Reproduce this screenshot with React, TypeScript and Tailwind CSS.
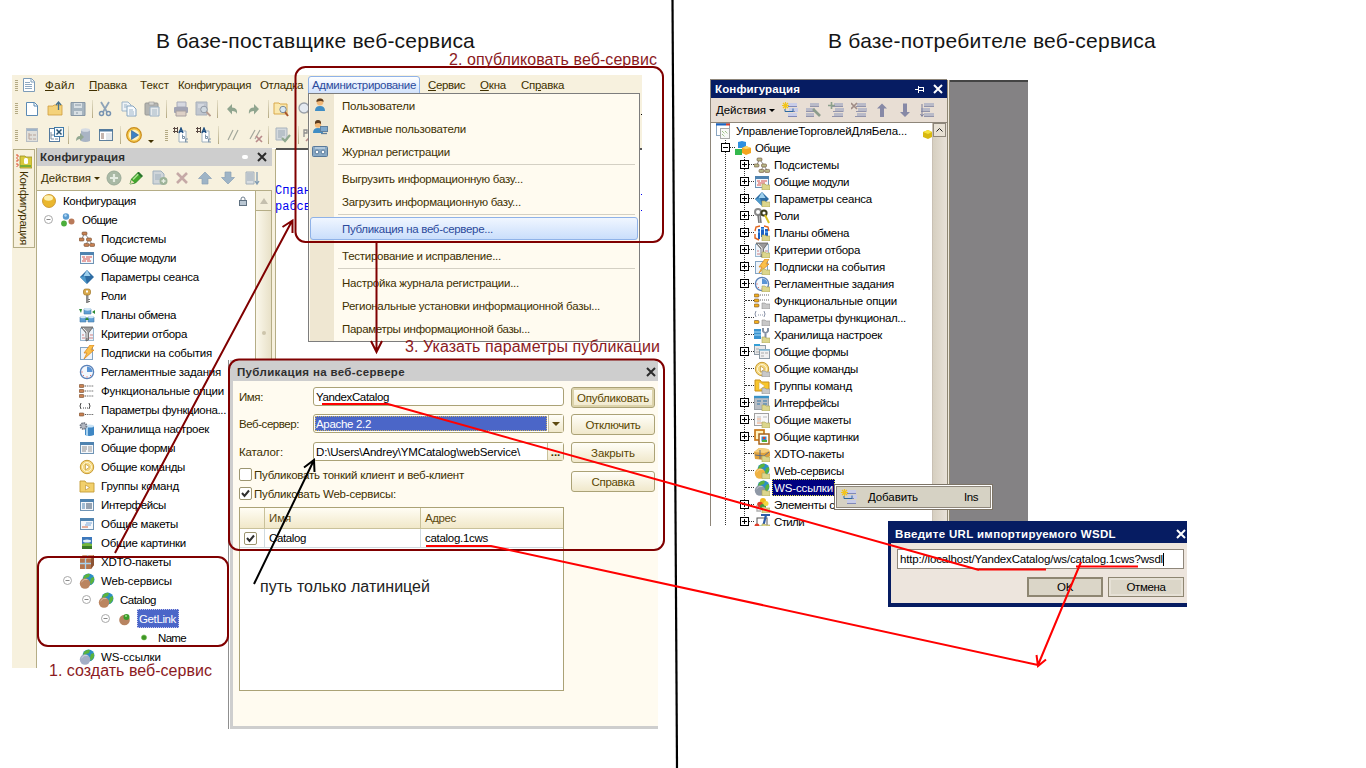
import React, { useLayoutEffect, useRef } from "react";

type TextProps = { w: number; className?: string; vertical?: boolean; children: React.ReactNode };

/* One-line label whose tracking is adjusted so that it takes up exactly w pixels. */
function T({ w, className = "", vertical = false, children }: TextProps) {
  const ref = useRef<HTMLSpanElement>(null);
  useLayoutEffect(() => {
    const el = ref.current;
    if (!el) return;
    el.style.letterSpacing = "0px";
    const box = el.getBoundingClientRect();
    const n = (el.textContent || "").length;
    el.style.letterSpacing = `${(w - (vertical ? box.height : box.width)) / n}px`;
  }, [w, vertical]);
  return (
    <span ref={ref} className={`inline-block shrink-0 whitespace-pre ${className}`}>
      {children}
    </span>
  );
}

function Svg({ children, className = "", s = 16 }: { children: React.ReactNode; className?: string; s?: number }) {
  return (
    <svg width={s} height={s} viewBox="0 0 16 16" fill="none" className={`shrink-0 ${className}`}>
      {children}
    </svg>
  );
}

const node = (x: number, y: number, f: string) => <rect x={x} y={y} width="5" height="3" rx="1" fill={f} stroke="#6b4a30" strokeWidth=".6" />;
const frame = (
  <>
    <rect x="1.5" y="2.5" width="13" height="11" fill="#f4f7fb" stroke="#6f94b5" />
    <rect x="1" y="2" width="14" height="3" fill="#4f83b0" />
  </>
);
const globe = (ball: string) => (
  <>
    <circle cx="9.5" cy="6.5" r="6" fill="#2c8fc4" />
    <path d="M5 3q3-3 6-2l-1 3-3 1-1 3-2-2zM12 5l3-1v4l-3 4-1-3z" fill="#5bb33c" />
    <circle cx="6" cy="10.5" r="5.2" fill={ball} />
    <path d="M2.5 9q2-3.500 6-2.500" stroke="#fff" strokeOpacity=".45" />
  </>
);

const G: Record<string, React.ReactNode> = {
  ball: (
    <>
      <circle cx="8" cy="8" r="6.500" fill="#eab72e" stroke="#c58d22" strokeWidth=".8" />
      <ellipse cx="7.500" cy="5" rx="4.500" ry="2.800" fill="#fdf0b0" />
    </>
  ),
  common: (
    <>
      <circle cx="6" cy="4.500" r="3.200" fill="#5a9bd0" />
      <circle cx="4" cy="11.500" r="2.900" fill="#4cae3c" />
      <circle cx="11.500" cy="9.500" r="3" fill="#b97a5a" />
      <circle cx="5.500" cy="3.500" r="1.200" fill="#b5d8f4" />
    </>
  ),
  commonR: (
    <>
      <path d="M3 2l4-1 4 1v6H3z" fill="#2f8fe0" />
      <path d="M0 9h7v6H0z" fill="#33b84c" />
      <path d="M7 8l4-2 5 2v5l-5 2-4-2z" fill="#f5a51d" />
      <path d="M7 8l4-2 5 2-5 1z" fill="#ffd766" />
    </>
  ),
  subs: (
    <>
      <path d="M5 3L3 8M6 3l4 5M10 9l3 4M10 9l-3 4" stroke="#8d8d8d" />
      {node(3, 1, "#c98253")}
      {node(0, 7, "#c98253")}
      {node(7.500, 7, "#c98253")}
      {node(5, 12.400, "#c98253")}
      {node(10.700, 12.400, "#c98253")}
    </>
  ),
  subsR: (
    <>
      <path d="M5 3L3 8M6 3l4 5M10 9l3 4M10 9l-3 4" stroke="#8d8d8d" />
      {node(3, 1, "#b9b98a")}
      {node(0, 7, "#b9b98a")}
      {node(7.500, 7, "#b9b98a")}
      {node(5, 12.400, "#b9b98a")}
      {node(10.700, 12.400, "#b9b98a")}
    </>
  ),
  modules: (
    <>
      {frame}
      <path d="M3 7h3M7 7h6M4 9h7M3 11h4M8 11h4" stroke="#d8534a" />
    </>
  ),
  diamond: (
    <>
      <path d="M8 1l7 7-7 7-7-7z" fill="#2d6ca3" />
      <path d="M8 1l3.500 6H4.500z" fill="#9ed0ee" />
      <path d="M1 8l5-1 2 8z" fill="#4f9acb" />
    </>
  ),
  key: (
    <>
      <path d="M7 7h2.500v8H7z" fill="#8c8c8c" />
      <path d="M9 11h2v1H9zM9 13h2v1H9z" fill="#777" />
      <rect x="4.500" y="1" width="7" height="6" rx="2" fill="#d9a94c" stroke="#a17728" strokeWidth=".7" />
      <rect x="7" y="2.500" width="2" height="2" fill="#fff" />
    </>
  ),
  keyR: (
    <>
      <circle cx="4" cy="4" r="3" stroke="#8a8a8a" strokeWidth="2" />
      <path d="M4 7l1 8M6 6l1 9" stroke="#777" strokeWidth="1.600" />
      <circle cx="10" cy="5" r="2.600" stroke="#3c3c1c" strokeWidth="2" />
      <path d="M11 7l4 8" stroke="#d8c020" strokeWidth="2" />
    </>
  ),
  plans: (
    <>
      <path d="M5 2h7v5H5zM1 10h6v5H1zM9 10h6v5H9z" fill="#5f9fd4" stroke="#4479a8" strokeWidth=".6" />
      <ellipse cx="8.500" cy="2.300" rx="3.500" ry="1.400" fill="#cfe6f7" />
      <ellipse cx="4" cy="10" rx="3" ry="1.300" fill="#cfe6f7" />
      <ellipse cx="12" cy="10" rx="3" ry="1.300" fill="#cfe6f7" />
      <path d="M0 2h3l-1 4zM16 3v4l-3-2zM6 13h4l-2-3z" fill="#2a8a34" />
    </>
  ),
  plansR: (
    <>
      <path d="M4 4h2v10H4zM7 2h3v10H7zM11 4h3v9h-3z" fill="#1c62c4" />
      <path d="M7 4h3M4 7h2M11 7h3" stroke="#7ccaff" />
      <path d="M1 6l1-4 4-1M15 6l-1-4-4-1M1 9v4l4 2" stroke="#e2641c" strokeWidth="1.400" />
    </>
  ),
  filter: (
    <>
      <rect x="1.500" y="2.500" width="13" height="12" fill="#eef4fa" stroke="#9bb8d0" />
      <path d="M3 12h3M3 9h2M11 9h3M10 12h4" stroke="#d08080" />
      <path d="M2 1h12L9.500 7v7L7 15V7z" fill="#9a9a9a" stroke="#5e5e5e" strokeWidth=".8" />
      <path d="M4 2l4 4v6" stroke="#e8e8e8" />
    </>
  ),
  bolt: (
    <>
      <rect x="1.500" y="2.500" width="12" height="12" fill="#eef4fa" stroke="#84a5c4" />
      <path d="M11 0h4l-3 5h3L5 14l3-6H5z" fill="#fbc04a" stroke="#d98822" strokeWidth=".8" />
    </>
  ),
  clock: (
    <>
      <circle cx="8" cy="8" r="6.600" fill="#f3f7fc" stroke="#5b82b8" strokeWidth="1.300" />
      <path d="M8 8V2.500A5.500 5.500 0 0 1 13.500 8z" fill="#5a95d6" />
      <path d="M2.500 8h1M8 13.500v-1M4 12l.7-.7M12 12l-.7-.7" stroke="#d23c3c" />
    </>
  ),
  opts: (
    <>
      {node(0, 1.500, "#c98253")}
      {node(0, 6.500, "#c98253")}
      {node(0, 11.500, "#c98253")}
      <path d="M6 3h9M6 8h9M6 13h9" stroke="#555" strokeDasharray="1.200 1" />
    </>
  ),
  optsR: (
    <>
      {node(0, 1, "#f2b01e")}
      {node(0, 6, "#f2b01e")}
      {node(0, 11, "#f2b01e")}
      <path d="M6 2h9M6 7h9" stroke="#666" strokeDasharray="1 1" />
    </>
  ),
  params: (
    <>
      <path d="M2 1Q0 4 2 7M10 1q2 3 0 6" stroke="#444" />
      <path d="M4 6h5" stroke="#444" strokeDasharray="1 1" />
      {node(0, 11, "#c98253")}
      <path d="M6 12.500h9" stroke="#555" strokeDasharray="1.200 1" />
    </>
  ),
  paramsR: (
    <>
      <path d="M2 1Q0 4 2 7M10 1q2 3 0 6" stroke="#8a93a8" />
      <path d="M4 5h5" stroke="#8a93a8" strokeDasharray="1 1" />
      {node(0, 10.500, "#f2b01e")}
    </>
  ),
  store: (
    <>
      <path d="M6 5h9v9q-4.500 2-9 0z" fill="#3f87c4" />
      <path d="M7 6h2v9H7z" fill="#a8d2f0" />
      <ellipse cx="10.500" cy="5" rx="4.500" ry="1.600" fill="#cbe4f6" />
      <circle cx="4.500" cy="5" r="3" fill="#b4b9c2" stroke="#747b88" strokeWidth="1.800" strokeDasharray="1.500 .8" />
    </>
  ),
  storeR: (
    <>
      <path d="M0 2h7v10H0z" fill="#3b93cf" />
      <path d="M0 5h7M0 8h7" stroke="#a9dbf7" />
      <path d="M9 1v3q2.500 4 5 0V1M11.500 6v6" stroke="#8390a3" strokeWidth="2" />
    </>
  ),
  form: (
    <>
      {frame}
      <path d="M3 7h5M3 9h5M3 11h4" stroke="#8b8b8b" />
      <path d="M9 7h4M9 9h4M9 11h4" stroke="#b9b9b9" strokeWidth="1.400" />
    </>
  ),
  formR: (
    <>
      <rect x=".5" y="1.500" width="11" height="9" fill="#e8e8e8" stroke="#8e9aa5" />
      <path d="M0 1h6" stroke="#35a0d8" strokeWidth="2" />
      <path d="M2 5h3M2 8h3" stroke="#aaa" />
      <rect x="5.500" y="5.500" width="10" height="9" fill="#f0f0f0" stroke="#8e9aa5" />
      <path d="M5 6h11" stroke="#7fb8d6" strokeWidth="1.500" />
      <path d="M7 9h3M11 9h3M7 12h3" stroke="#aaa" />
    </>
  ),
  command: (
    <>
      <circle cx="8" cy="8" r="6.700" fill="#f4d67c" stroke="#c79b35" />
      <circle cx="8" cy="8" r="4.500" stroke="#fff7d8" />
      <path d="M6.500 5l4 3-4 3z" fill="#fff" stroke="#b58a2c" strokeWidth=".6" />
    </>
  ),
  group: (
    <>
      <path d="M1 3h5l1.500 2H15v9H1z" fill="#f2d06c" stroke="#c49c35" strokeWidth=".9" />
      <path d="M6.500 7l4 2.500-4 2.500z" fill="#fff" stroke="#b58a2c" strokeWidth=".6" />
    </>
  ),
  groupR: (
    <>
      <path d="M1 2h5l1.500 2H15v9H1z" fill="#f8c62c" stroke="#c8901c" />
      <path d="M5 4l6 4-6 4z" fill="#fff" stroke="#d8a83c" strokeWidth=".6" />
    </>
  ),
  iface: (
    <>
      {frame}
      <path d="M3 7h3M3 9h3M3 11h3" stroke="#4f83b0" />
      <path d="M7 7h6M7 9h6M7 11h6" stroke="#77889a" strokeWidth="1.300" />
    </>
  ),
  ifaceR: (
    <>
      <rect x=".5" y="1.500" width="14" height="13" fill="#b9bec4" stroke="#98a0a8" />
      <path d="M0 2h15" stroke="#3a93c8" strokeWidth="2.400" />
      <path d="M3 6h4M9 6h4M3 9h3M9 9h4" stroke="#5d8fb4" strokeWidth="1.300" />
    </>
  ),
  layout: (
    <>
      {frame}
      <path d="M7 7h6M6 9h6" stroke="#7aa6d6" />
      <path d="M3 11h6" stroke="#e08a6a" strokeWidth="1.300" />
    </>
  ),
  layoutR: (
    <>
      <rect x=".5" y="1.500" width="14" height="12" fill="#f8f8f8" stroke="#a0a0a0" />
      <path d="M3 5h4M3 9h4M9 5h4" stroke="#bbb" />
      <path d="M3 7h4M3 11h7" stroke="#eaa07a" />
    </>
  ),
  picture: (
    <>
      <rect x="3" y="2" width="10" height="12" fill="#3c78bc" />
      <ellipse cx="8" cy="6" rx="4" ry="1.500" fill="#e3f0fa" />
      <path d="M3 9q5-2 10 0v2H3z" fill="#74b83c" />
      <path d="M3 11h10v3H3z" fill="#3a7a28" />
    </>
  ),
  pictureR: (
    <>
      <rect x="1" y="1" width="9" height="10" fill="#fff2c0" stroke="#c87818" strokeWidth="1.700" />
      <rect x="5" y="5" width="10" height="10" fill="#fff" stroke="#a8641c" strokeWidth="1.500" />
      <rect x="7.500" y="7.500" width="5" height="5" fill="#3a84c4" />
      <path d="M8 11h5v2H8z" fill="#4cae3c" />
      <path d="M9 8h2v2H9z" fill="#e03c28" />
    </>
  ),
  xdto: (
    <>
      <path d="M4 1h11v10l-3 4H1V5z" fill="#b5764e" />
      <path d="M4 1h11l-3 4H1z" fill="#d6a27e" />
      <path d="M12 5l3-4v10l-3 4z" fill="#8c5434" />
      <path d="M6.500 5v10M1 9.500h11M6.500 5L9 1" stroke="#a9d2ee" strokeWidth="1.300" />
    </>
  ),
  xdtoR: (
    <>
      <path d="M0 6l5-4 9 1 2 3v4l-5 4-10-1z" fill="#e0a23c" />
      <path d="M0 6l5-4 9 1 2 2-6 2z" fill="#f6cf7c" />
      <path d="M6 4v9M1 9l9 1 5-4" stroke="#5b6b88" />
    </>
  ),
  web: globe("#bb8560"),
  webR: globe("#efb243"),
  ws: globe("#a3aec6"),
  wsR: globe("#8f98a6"),
  op: (
    <>
      <circle cx="7.500" cy="9" r="5.300" fill="#b78461" />
      <circle cx="9.500" cy="6" r="3" fill="#3c9c2c" />
      <circle cx="9" cy="5" r="1" fill="#a5e08c" />
    </>
  ),
  dot: <circle cx="8" cy="7.500" r="2.600" fill="#3f9624" stroke="#7ec565" strokeWidth=".6" />,
  cfgR: (
    <>
      <rect x=".5" y=".5" width="13" height="12" fill="#fff" stroke="#8aa5c0" />
      <path d="M0 1.500h10" stroke="#1b62c0" strokeWidth="2" />
      <path d="M10 1.500h4" stroke="#d84030" strokeWidth="2" />
      <rect x="4.500" y="5.500" width="9" height="10" fill="#f7f7f7" stroke="#a8a8a8" />
      <path d="M6 8l3 3M9 8l3 3M6 11l3 3" stroke="#70a850" strokeDasharray="1 1" />
    </>
  ),
  style: (
    <>
      <circle cx="9" cy="4" r="3" fill="#f0b820" />
      <circle cx="6" cy="7.500" r="2.800" fill="#e03c28" />
      <circle cx="9" cy="10" r="3" fill="#3c9c3c" />
      <circle cx="12" cy="6.500" r="2.500" fill="#f0d840" />
      <path d="M3 8v6h4" stroke="#b0b0b0" strokeWidth="1.400" />
    </>
  ),
  style2: (
    <>
      <rect x="3" y="4" width="10" height="9" fill="#fff" stroke="#555" />
      <path d="M7 1h9M12 1L9.500 11" stroke="#2c5ca8" strokeWidth="2.200" />
      <circle cx="3" cy="12" r="2.500" fill="#e03c28" />
      <circle cx="7" cy="14" r="2.500" fill="#3c9c3c" />
    </>
  ),
};

const page = (c: string, x = 2) => (
  <>
    <path d={`M${x + 0.5} 1.500h8l3 3v10h-11z`} fill="#fff" stroke={c} />
    <path d={`M${x + 8} 1.500v3.500h3.500`} stroke={c} />
  </>
);

function Bar({ k, className = "" }: { k: string; className?: string }) {
  const m: Record<string, React.ReactNode> = {
    doc: (
      <>
        {page("#7d9cb8")}
        <path d="M4 5.500h5M4 7.500h7M4 9.500h7M4 11.500h7" stroke="#8fa9c2" />
      </>
    ),
    fresh: page("#5b8ab4"),
    open: (
      <>
        <path d="M1 5h5l1-1h8v10H1z" fill="#f4d27a" stroke="#cf9c3c" strokeWidth=".8" />
        <path d="M11.500 9V1.500M9 4l2.500-3L14 4" stroke="#44708c" strokeWidth="1.300" />
      </>
    ),
    save: (
      <>
        <path d="M1 1.500h14v13H1z" fill="#a6b4bf" stroke="#8897a5" />
        <path d="M4 2h8v5H4zM4 10h8v4H4z" fill="#d9e0e4" />
        <path d="M5 4h6M6 12h2" stroke="#8c9aa8" />
      </>
    ),
    cut: (
      <>
        <path d="M4 1l6 10M12 1L6 11" stroke="#8ea3b8" strokeWidth="1.800" />
        <circle cx="4.500" cy="12.500" r="2" stroke="#7692b0" strokeWidth="1.500" />
        <circle cx="11.500" cy="12.500" r="2" stroke="#7692b0" strokeWidth="1.500" />
      </>
    ),
    copy: (
      <>
        <path d="M1 1h6l3 3v6H1z" fill="#eef3f6" stroke="#9db4c7" />
        <path d="M6 5h6l3 3v7H6z" fill="#f7fafc" stroke="#86a5c0" />
        <path d="M8 9h4M8 11h5M8 13h5M3 4h3M3 6h3" stroke="#9db4c7" />
      </>
    ),
    paste: (
      <>
        <rect x="1" y="2" width="13" height="12" rx="1" fill="#b3b4b1" stroke="#9a9a96" />
        <rect x="5" y="1" width="5" height="3" fill="#d5d5d0" stroke="#999" strokeWidth=".6" />
        <path d="M6 6h9v9H6z" fill="#e6eaec" stroke="#9bb0c2" />
        <path d="M8 9h5M8 11h5M8 13h5" stroke="#a6b8c6" />
      </>
    ),
    print: (
      <>
        <path d="M4 1h9v5H4z" fill="#d6d8e0" stroke="#a7aab8" />
        <rect x="1" y="6" width="14" height="6" rx="1" fill="#a2a4b4" />
        <path d="M3 10h10v5H3z" fill="#ddd0c6" stroke="#a8a0a0" />
      </>
    ),
    preview: (
      <>
        <path d="M1 1h11v13H1z" fill="#c0c6cf" stroke="#a8b0bb" />
        <path d="M3 4h6M3 6h4" stroke="#e6e9ee" />
        <circle cx="9" cy="8.500" r="3.300" fill="#cfd8df" stroke="#9199a5" />
        <path d="M11.500 11l4 4" stroke="#b89c90" strokeWidth="1.800" />
      </>
    ),
    undo: <path d="M3 8l5-5v3.500q6 0 5 6.500-1-3-5-3v3.500z" fill="#90a58f" />,
    redo: <path d="M14 8L9 3v3.500q-6 0-5 6.500 1-3 5-3v3.500z" fill="#90a58f" />,
    fsearch: (
      <>
        <path d="M1 2h5l1 1h7v10H1z" fill="#fae8ae" stroke="#d9a94c" />
        <circle cx="10" cy="8.500" r="3.200" fill="#d7e7f2" stroke="#7b8b98" />
        <path d="M12 11l3 4" stroke="#a9552c" strokeWidth="2" />
      </>
    ),
    search: (
      <>
        <circle cx="8" cy="7" r="5" fill="#e4e9f0" stroke="#9aa0a8" strokeWidth="1.300" />
        <path d="M12 11l3 4" stroke="#9c8070" strokeWidth="2" />
      </>
    ),
    tree: (
      <>
        <rect x="2.500" y="1.500" width="11" height="13" fill="#e0dfdb" stroke="#b6bdc4" />
        <path d="M3 3h10" stroke="#9fb4c8" strokeWidth="2" />
        <path d="M5 6v6h3M5 8h3M9 8h3M9 12h3" stroke="#b8a398" />
      </>
    ),
    treex: (
      <>
        <rect x="1.500" y="1.500" width="10" height="13" fill="#fff" stroke="#53799e" />
        <path d="M3 5v7h3M3 8h3M7 12h3" stroke="#7a8da0" />
        <rect x="6.500" y=".5" width="9" height="9" fill="#f4f9fd" stroke="#3f7aa8" />
        <path d="M8.500 2.500l5 5M13.500 2.500l-5 5" stroke="#27506f" strokeWidth="1.500" />
      </>
    ),
    db: (
      <>
        <path d="M6 3h9v11q-4.500 2-9 0z" fill="#a9b4c4" />
        <ellipse cx="10.500" cy="3" rx="4.500" ry="1.800" fill="#d5dbe3" />
        <path d="M1 14q0-5 4-5V6l4 4-4 4v-2q-2 0-4 2z" fill="#93a892" />
      </>
    ),
    win: (
      <>
        <rect x="1.500" y="2.500" width="13" height="11" fill="#fff" stroke="#5e7f9c" />
        <path d="M1 3.500h14" stroke="#4c799f" strokeWidth="2" />
        <path d="M3 7h3M3 9h3M3 11h3" stroke="#8a6c5c" />
        <path d="M8 6h6v7H8z" fill="#e3e8ec" />
      </>
    ),
    play: (
      <>
        <circle cx="8" cy="8" r="7.300" fill="#f5c84c" stroke="#c98c1c" strokeWidth="1.200" />
        <circle cx="8" cy="8" r="5.300" fill="#fdf1c4" />
        <path d="M5.500 3.500l7 4.500-7 4.500z" fill="#3d81c4" stroke="#235a94" strokeWidth=".6" />
      </>
    ),
    abc: (
      <>
        <path d="M6 4h7v11H6z" fill="#fff" stroke="#9fb1bf" />
        <path d="M0 1.500h5M0 4.500h5M1.500 0v6M4.500 0v6" stroke="#5a4a44" />
        <path d="M6 6l2-5 2 5M6.500 4.500h3" stroke="#1b4d80" strokeWidth="1.300" />
        <path d="M9.500 7.500v4h2v-2h-2M15 12h-2.500v3H15" stroke="#7f95aa" />
      </>
    ),
    slashes: <path d="M4 13L9 3M9 13l5-10" stroke="#a3a79c" strokeWidth="1.200" />,
    slashx: (
      <>
        <path d="M2 12L7 3M7 12l5-9" stroke="#a3a79c" strokeWidth="1.200" />
        <path d="M8 9l6 6M14 9l-6 6" stroke="#b98a8a" strokeWidth="1.700" />
      </>
    ),
    check: (
      <>
        <path d="M1 1h11v12H1z" fill="#d4d9dd" stroke="#a8b3bd" />
        <path d="M3 4h7M3 6h7M3 8h7M3 10h4" stroke="#9ca9b5" />
        <path d="M7 11l3 3 5-6" stroke="#8fa88e" strokeWidth="2.200" />
      </>
    ),
    proc: (
      <>
        <path d="M2 10V3h3v3H2" stroke="#8f8f8f" strokeWidth="1.300" />
        <path d="M4 14l5-5M10 9l5 5" stroke="#b98a8a" strokeWidth="1.600" />
      </>
    ),
    add: (
      <>
        <circle cx="8" cy="8" r="7" fill="#a9b9a5" stroke="#9aaa98" />
        <path d="M8 4v8M4 8h8" stroke="#e4ebe1" strokeWidth="2.200" />
      </>
    ),
    pencil: (
      <>
        <path d="M2 14l1.500-5 7-7 4 4-7 7z" fill="#42a82c" stroke="#2a7d22" strokeWidth=".8" />
        <path d="M5 9.500l6-6" stroke="#a9e28e" strokeWidth="1.600" />
        <path d="M2 14l1.500-4 2.800 2.800z" fill="#eaddbb" />
        <path d="M10.500 2l4 4-1.200 1.200-4-4z" fill="#276d30" />
      </>
    ),
    copyadd: (
      <>
        <path d="M1 1h8l3 3v10H1z" fill="#cfd5d9" stroke="#a0b0bd" />
        <path d="M3 5h6M3 7h6M3 9h6" stroke="#9fb0bd" />
        <circle cx="11.500" cy="11" r="4" fill="#9db398" />
        <path d="M11.500 9v4M9.500 11h4" stroke="#e9f0e6" strokeWidth="1.300" />
      </>
    ),
    del: <path d="M3 3l10 10M13 3L3 13" stroke="#c5a9a6" strokeWidth="2.600" />,
    up: <path d="M8 2l6.500 6.500H11V14H5V8.500H1.500z" fill="#9eb4c6" stroke="#8aa1b6" strokeWidth=".7" />,
    down: <path d="M8 14l6.500-6.500H11V2H5v5.500H1.500z" fill="#9eb4c6" stroke="#8aa1b6" strokeWidth=".7" />,
    sort: (
      <>
        <path d="M2 2h8v12H2z" fill="#d8dde1" stroke="#a4b0ba" />
        <path d="M3 4h6M3 6h6M3 8h6M3 10h6" stroke="#9eabb6" />
        <path d="M13 2v11M11 11l2 3 2-3" stroke="#7f9ab2" strokeWidth="1.300" />
      </>
    ),
    list: (
      <>
        <path d="M6 1h9v4H6zM7 6h9v4H7zM6 11h9v4H6z" fill="#c9cde8" />
        <path d="M6 4.500h9M3 9.500h10M6 14.500h9" stroke="#8088b8" />
        <path d="M3 7v2.500h8v-3" stroke="#2c68a0" />
        <path d="M3.500 0v7M0 3.500h7M1 1l5 5M6 1L1 6" stroke="#f2c41c" strokeWidth="1.200" />
      </>
    ),
    listg: (
      <>
        <path d="M5 1h10v4H5zM2 6h9v4H2zM5 11h10v4H5z" fill="#b9bac8" />
        <path d="M5 4.500h10M2 9.500h9M5 14.500h10" stroke="#9293aa" />
        <path d="M3 2v12M1.500 12L3 14.500 4.500 12" stroke="#7d7f9c" />
      </>
    ),
    liste: (
      <>
        <path d="M5 1h9v4H5zM1 6h9v4H1zM1 11h8v4H1z" fill="#b9bac8" />
        <path d="M5 4.500h9M1 9.500h9M1 14.500h8" stroke="#9293aa" />
        <path d="M8 7l7 7" stroke="#8c9c8c" strokeWidth="2.600" />
      </>
    ),
    lista: (
      <>
        <path d="M6 1h9v4H6zM7 6h9v4H7zM6 11h9v4H6z" fill="#b9bac8" />
        <path d="M4 4.500h11M5 9.500h10M4 14.500h11" stroke="#9293aa" />
        <path d="M3.500 0v7M0 3.500h7" stroke="#8ca08c" strokeWidth="1.600" />
      </>
    ),
    listx: (
      <>
        <path d="M6 1h9v4H6zM7 6h9v4H7zM6 11h9v4H6z" fill="#b9bac8" />
        <path d="M5 4.500h10M5 9.500h10M4 14.500h11" stroke="#9293aa" />
        <path d="M0 1l6 6M6 1L0 7" stroke="#a08c86" strokeWidth="1.600" />
      </>
    ),
    upr: <path d="M8 1.500l5 5h-3V15H6V6.500H3z" fill="#8789a6" />,
    downr: <path d="M8 15l5-5h-3V1.500H6V10H3z" fill="#8789a6" />,
    user: (
      <>
        <circle cx="8" cy="5" r="3.400" fill="#f2b877" />
        <path d="M4.500 5Q4 1.500 8 1.500T11.500 5Q9 3 4.500 5z" fill="#5b3a1c" />
        <path d="M3 14q0-5 5-5t5 5z" fill="#3f8dc4" />
      </>
    ),
    users: (
      <>
        <circle cx="6" cy="4.500" r="3.200" fill="#f2b877" />
        <path d="M3 4q-.5-4 3-4t3 4Q6.500 2 3 4z" fill="#5b3a1c" />
        <path d="M1 13q0-5 5-5t5 5z" fill="#3f8dc4" />
        <rect x="8.500" y="6.500" width="7" height="5" fill="#7ea8cc" stroke="#5f7f9c" />
        <path d="M9 13.500h6" stroke="#5f7f9c" strokeWidth="1.300" />
      </>
    ),
    tape: (
      <>
        <rect x=".5" y="3.500" width="15" height="10" rx="1" fill="#89a9c4" stroke="#58799a" />
        <path d="M3 5h10" stroke="#dce8f2" />
        <circle cx="5" cy="9" r="1.900" fill="#fff" stroke="#58799a" />
        <circle cx="11" cy="9" r="1.900" fill="#fff" stroke="#58799a" />
      </>
    ),
    side: (
      <>
        <path d="M1 1v13M1 3h3M1 7h3M1 12h3" stroke="#e05030" strokeDasharray="2 1" />
        <path d="M4 3h5l1 1h6v11H4z" fill="#d8c93c" stroke="#9c9024" strokeWidth=".8" />
        <rect x="8" y="5" width="4" height="6" rx="1.500" fill="#fff" />
        <path d="M4 12h11v2H4z" fill="#79ad38" />
      </>
    ),
  };
  return <Svg className={className}>{m[k]}</Svg>;
}

const Caret = ({ className = "" }: { className?: string }) => (
  <span className={`h-0 w-0 shrink-0 border-x-[3px] border-t-[3px] border-x-transparent ${className}`} />
);
const Grip = ({ className = "" }: { className?: string }) => (
  <svg width="4" height="11" className={`shrink-0 ${className}`} shapeRendering="crispEdges">
    <path d="M1.500 0v11" stroke="#b3a983" strokeWidth="3" strokeDasharray="1 1" />
  </svg>
);
const Sep = ({ className = "" }: { className?: string }) => (
  <span className={`h-[18px] w-px shrink-0 bg-gradient-to-b from-[#e5dfc8] to-[#b5aa84] ${className}`} />
);
const Cross = ({ c, s = 10 }: { c: string; s?: number }) => (
  <svg width={s} height={s} viewBox="0 0 10 10" className="shrink-0">
    <path d="M1 1l8 8M9 1L1 9" stroke={c} strokeWidth="2" />
  </svg>
);
const Minus = () => (
  <svg width="9" height="9" viewBox="0 0 9 9" className="shrink-0" fill="none">
    <circle cx="4.500" cy="4.500" r="4" fill="#fff" stroke="#a9a9a9" />
    <path d="M2.500 4.500h4" stroke="#888" />
  </svg>
);

const leftRows: [string, string, number][] = [
  ["subs", "Подсистемы", 65],
  ["modules", "Общие модули", 75],
  ["diamond", "Параметры сеанса", 98],
  ["key", "Роли", 25],
  ["plans", "Планы обмена", 75],
  ["filter", "Критерии отбора", 86],
  ["bolt", "Подписки на события", 111],
  ["clock", "Регламентные задания", 120],
  ["opts", "Функциональные опции", 123],
  ["params", "Параметры функциона...", 125],
  ["store", "Хранилища настроек", 108],
  ["form", "Общие формы", 74],
  ["command", "Общие команды", 84],
  ["group", "Группы команд", 78],
  ["iface", "Интерфейсы", 65],
  ["layout", "Общие макеты", 77],
  ["picture", "Общие картинки", 85],
  ["xdto", "XDTO-пакеты", 70],
];

/* icon, label, label width, expandable, folder mark: y yellow, g gray, n none */
const rightRows: [string, string, number, boolean, string][] = [
  ["subsR", "Подсистемы", 65, true, "n"],
  ["modules", "Общие модули", 75, true, "y"],
  ["diamond", "Параметры сеанса", 98, true, "y"],
  ["keyR", "Роли", 25, true, "n"],
  ["plansR", "Планы обмена", 75, true, "y"],
  ["filter", "Критерии отбора", 86, true, "y"],
  ["bolt", "Подписки на события", 111, true, "y"],
  ["clock", "Регламентные задания", 120, true, "y"],
  ["optsR", "Функциональные опции", 123, false, "g"],
  ["paramsR", "Параметры функционал...", 132, false, "g"],
  ["storeR", "Хранилища настроек", 108, false, "y"],
  ["formR", "Общие формы", 74, true, "n"],
  ["command", "Общие команды", 84, false, "g"],
  ["groupR", "Группы команд", 78, false, "g"],
  ["ifaceR", "Интерфейсы", 65, true, "y"],
  ["layoutR", "Общие макеты", 77, true, "y"],
  ["pictureR", "Общие картинки", 85, true, "n"],
  ["xdtoR", "XDTO-пакеты", 70, false, "y"],
  ["webR", "Web-сервисы", 70, false, "y"],
  ["wsR", "WS-ссылки", 59, false, "y"],
  ["style", "Элементы стиля", 84, true, "y"],
  ["style2", "Стили", 30, true, "y"],
];

const menuItems: [string, number, string?][] = [
  ["Пользователи", 73, "user"],
  ["Активные пользователи", 124, "users"],
  ["Журнал регистрации", 108, "tape"],
  ["-", 0],
  ["Выгрузить информационную базу...", 181],
  ["Загрузить информационную базу...", 179],
  ["-", 0],
  ["Публикация на веб-сервере...", 151],
  ["-", 0],
  ["Тестирование и исправление...", 159],
  ["-", 0],
  ["Настройка журнала регистрации...", 177],
  ["Региональные установки информационной базы...", 258],
  ["Параметры информационной базы...", 188],
];

function Designer() {
  return (
    <div className="absolute left-[12px] top-[75px] flex h-[593px] w-[630px] flex-col text-[#403000]">
      <div className="flex h-[20px] shrink-0 items-center bg-[#f7f1de]">
        <Grip className="ml-[3px]" />
        <Bar k="doc" className="ml-[2px]" />
        <T w={30} className="ml-[8px]"><u>Ф</u>айл</T>
        <T w={38} className="ml-[14px]"><u>П</u>равка</T>
        <T w={29} className="ml-[13px]">Текст</T>
        <T w={73} className="ml-[9px]">Конфигурация</T>
        <T w={43} className="ml-[9px]">Отладка</T>
        <div className="ml-[5px] flex h-[19px] w-[112px] items-center justify-center rounded-t-[3px] border border-[#8fb2e8] bg-gradient-to-b from-white to-[#cfe0fb] text-[#2b4a9c]">
          <T w={104}>Администрирование</T>
        </div>
        <T w={37} className="ml-[8px]"><u>С</u>ервис</T>
        <T w={26} className="ml-[15px]"><u>О</u>кна</T>
        <T w={43} className="ml-[15px]">Сп<u>р</u>авка</T>
      </div>
      <div className="flex h-[27px] shrink-0 items-center bg-[#f7f1de]">
        <Grip className="ml-[3px]" />
        <Bar k="fresh" className="ml-[5px]" />
        <Bar k="open" className="ml-[7px]" />
        <Bar k="save" className="ml-[7px]" />
        <Sep className="ml-[6px]" />
        <Bar k="cut" className="ml-[4px]" />
        <Bar k="copy" className="ml-[8px]" />
        <Bar k="paste" className="ml-[7px]" />
        <Sep className="ml-[6px]" />
        <Bar k="print" className="ml-[6px]" />
        <Bar k="preview" className="ml-[6px]" />
        <Sep className="ml-[6px]" />
        <Bar k="undo" className="ml-[6px]" />
        <Bar k="redo" className="ml-[5px]" />
        <Sep className="ml-[7px]" />
        <Bar k="fsearch" className="ml-[4px]" />
        <Bar k="search" className="ml-[7px]" />
        <span className="ml-auto mt-[11px] h-px w-px bg-black" />
      </div>
      <div className="flex h-[26px] shrink-0 items-center bg-[#f7f1de]">
        <Grip className="ml-[3px]" />
        <Bar k="tree" className="ml-[5px]" />
        <Bar k="treex" className="ml-[8px]" />
        <Sep className="ml-[4px]" />
        <Bar k="db" className="ml-[6px]" />
        <Bar k="win" className="ml-[7px]" />
        <Sep className="ml-[6px]" />
        <Bar k="play" className="ml-[5px]" />
        <Caret className="ml-[6px] mt-[13px] border-t-[#403000]" />
        <Grip className="ml-[11px]" />
        <Bar k="abc" className="ml-[4px]" />
        <Bar k="abc" className="ml-[7px]" />
        <Sep className="ml-[6px]" />
        <Bar k="slashes" className="ml-[5px]" />
        <Bar k="slashx" className="ml-[8px]" />
        <Sep className="ml-[4px]" />
        <Bar k="check" className="ml-[6px]" />
        <Sep className="ml-[7px]" />
        <Bar k="proc" className="ml-[3px]" />
      </div>
      <div className="flex min-h-0 flex-1">
        <div className="w-[24px] shrink-0 bg-[#f7f1de] pl-px pt-px">
          <div className="flex h-[99px] w-[22px] flex-col items-center border border-[#b5ad86] pt-[3px]">
            <Bar k="side" />
            <T w={74} vertical className="mt-[2px] leading-[20px] [writing-mode:vertical-rl]">Конфигурация</T>
          </div>
        </div>
        <div className="flex w-[236px] shrink-0 flex-col border-l border-[#b5ad86]">
          <div className="flex h-[18px] shrink-0 items-center bg-[#cecece] pl-[3px] font-bold text-[#2e2e2e]">
            <T w={85}>Конфигурация</T>
            <svg width="8" height="6" className="ml-[116px]">
              <rect x="1" y="1" width="6" height="4" rx="2" fill="#fff" />
            </svg>
            <span className="ml-[8px] flex"><Cross c="#2b2b2b" /></span>
          </div>
          <div className="flex h-[24px] shrink-0 items-center bg-[#f7f1de] pl-[4px]">
            <T w={50}>Действия</T>
            <Caret className="ml-[3px] border-t-[#403000]" />
            <Bar k="add" className="ml-[6px]" />
            <Bar k="pencil" className="ml-[6px]" />
            <Bar k="copyadd" className="ml-[8px]" />
            <Bar k="del" className="ml-[6px]" />
            <Bar k="up" className="ml-[7px]" />
            <Bar k="down" className="ml-[7px]" />
            <Bar k="sort" className="ml-[8px]" />
          </div>
          <div className="flex min-h-0 flex-1 border-t border-[#b5ad86] bg-white text-black">
            <div className="w-[218px] shrink-0 overflow-hidden">
              <div className="flex h-[19px] items-center pl-[4px]">
                <Svg>{G.ball}</Svg>
                <T w={73} className="ml-[6px]">Конфигурация</T>
                <svg width="8" height="10" className="ml-[103px]" fill="none">
                  <path d="M2 5V3q0-2 2-2t2 2v2" stroke="#6f7f8f" />
                  <rect x=".5" y="4.500" width="7" height="5" fill="#b9c6d2" stroke="#5f7080" />
                </svg>
              </div>
              <div className="flex h-[19px] items-center pl-[7px]">
                <Minus />
                <Svg className="ml-[7px]">{G.common}</Svg>
                <T w={35} className="ml-[6px]">Общие</T>
              </div>
              {leftRows.map(([k, t, w]) => (
                <div key={t} className="flex h-[19px] items-center pl-[42px]">
                  <Svg>{G[k]}</Svg>
                  <T w={w} className="ml-[6px]">{t}</T>
                </div>
              ))}
              <div className="flex h-[19px] items-center pl-[26px]">
                <Minus />
                <Svg className="ml-[7px]">{G.web}</Svg>
                <T w={71} className="ml-[6px]">Web-сервисы</T>
              </div>
              <div className="flex h-[19px] items-center pl-[45px]">
                <Minus />
                <Svg className="ml-[7px]">{G.web}</Svg>
                <T w={36} className="ml-[6px]">Catalog</T>
              </div>
              <div className="flex h-[19px] items-center pl-[64px]">
                <Minus />
                <Svg className="ml-[7px]">{G.op}</Svg>
                <span className="ml-[4px] flex h-[19px] w-[42px] items-center border border-dotted border-[#c8c8f0] bg-[#4b66c8] pl-px text-white">
                  <T w={37}>GetLink</T>
                </span>
              </div>
              <div className="flex h-[19px] items-center pl-[99px]">
                <Svg>{G.dot}</Svg>
                <T w={28} className="ml-[6px]">Name</T>
              </div>
              <div className="flex h-[19px] items-center pl-[42px]">
                <Svg>{G.ws}</Svg>
                <T w={60} className="ml-[6px]">WS-ссылки</T>
              </div>
            </div>
            <div className="flex h-[170px] w-[17px] shrink-0 flex-col border-x border-[#b5ad86] bg-[#f3eedb]">
              <div className="flex h-[20px] items-center justify-center border-b border-[#b5ad86]">
                <span className="h-0 w-0 border-x-[4px] border-b-[6px] border-x-transparent border-b-[#c4bfae]" />
              </div>
              <div className="flex flex-1 items-center justify-center bg-gradient-to-r from-[#fbf8ec] to-[#e8e1c8] pt-[94px]">
                <span className="h-[4px] w-[4px] rounded-full bg-[#cdc5ab]" />
              </div>
            </div>
          </div>
        </div>
        <div className="mt-px h-[210px] w-[4px] shrink-0 border-r border-[#b5ad86] bg-[#f7f1de]" />
        <div className="flex-1 overflow-hidden border-t-2 border-[#555] bg-white pt-[33px] font-['Liberation_Mono',monospace] text-[12px] leading-[16px] text-[#0000f0]">
          <div className="-ml-[1px] flex justify-between"><span>Спран</span><span className="h-[12px] w-[1px] border-b border-[#0000f0]" /></div>
          <div className="-ml-[1px] flex justify-between"><span>рабсв</span><span className="h-[12px] w-[1px] border-b border-[#0000f0]" /></div>
        </div>
      </div>
    </div>
  );
}

function AdminMenu() {
  return (
    <div className="absolute left-[308px] top-[93px] flex h-[249px] w-[332px] flex-col border border-[#7d7d7d] bg-[linear-gradient(to_right,#fffbf0_1px,#efe7d2_1px,#efe7d2_25px,#fffbf0_25px)] text-[#403000]">
      {menuItems.map(([t, w, icon], i) =>
        t === "-" ? (
          <div key={i} className="ml-[29px] mr-[4px] h-[4px] shrink-0 pt-px">
            <div className="h-px bg-[#d4d0c4]" />
          </div>
        ) : i === 7 ? (
          <div key={i} className="mx-px flex h-[23px] shrink-0 items-center rounded-[3px] border border-[#8fb2e8] bg-gradient-to-b from-[#f0f6ff] to-[#cadefb] pl-[31px] text-[#2b4a9c]">
            <T w={w}>{t}</T>
          </div>
        ) : (
          <div key={i} className="flex h-[23px] shrink-0 items-center pl-[3px]">
            <span className="flex w-[30px] pb-[2px]">{icon && <Bar k={icon} />}</span>
            <T w={w}>{t}</T>
          </div>
        ),
      )}
    </div>
  );
}

const Check = ({ on }: { on?: boolean }) => (
  <span className="flex h-[13px] w-[13px] shrink-0 items-center justify-center rounded-[2px] border border-[#9c9570] bg-white">
    {on && (
      <svg width="9" height="9" viewBox="0 0 9 9" fill="none">
        <path d="M1 4l2.500 3L8 1.500" stroke="#2f2f2f" strokeWidth="2" />
      </svg>
    )}
  </span>
);

function Btn({ t, w, focus, className = "" }: { t: string; w: number; focus?: boolean; className?: string }) {
  return (
    <div
      className={`flex h-[21px] w-[84px] items-center justify-center rounded-[3px] border border-[#aba276] bg-gradient-to-b from-[#fffef8] to-[#f0e8cb] ${
        focus ? "shadow-[inset_0_0_0_2px_#dcd3ab]" : ""
      } ${className}`}
    >
      <T w={w}>{t}</T>
    </div>
  );
}

function PublishDialog() {
  return (
    <div className="absolute left-[228px] top-[360px] flex h-[369px] w-[430px] border-l border-[#8f8f8f] bg-white pl-px text-[#403000]">
      <div className="flex flex-1 flex-col border-b-[3px] border-l-[3px] border-[#cecece] bg-[#fffbf0]">
        <div className="flex h-[21px] shrink-0 items-center justify-between bg-[#cecece] pl-[4px] pr-[2px] pt-[2px] font-bold text-[#2e2e2e]">
          <T w={168}>Публикация на веб-сервере</T>
          <Cross c="#2b2b2b" />
        </div>
        <div className="flex pl-[6px] pt-[6px]">
          <div className="w-[325px] shrink-0">
            <div className="flex h-[19px] items-center">
              <div className="w-[74px] shrink-0"><T w={24}>Имя:</T></div>
              <div className="flex h-[19px] flex-1 items-center rounded-[3px] border border-[#aba276] bg-white pl-[2px] text-black">
                <T w={73}>YandexCatalog</T>
              </div>
            </div>
            <div className="mt-[8px] flex h-[19px] items-center">
              <div className="w-[74px] shrink-0"><T w={60}>Веб-сервер:</T></div>
              <div className="flex h-[19px] flex-1 items-center rounded-[3px] border border-[#aba276] bg-white pl-px">
                <div className="flex h-[15px] w-[232px] items-center border border-dotted border-[#c9b36a] bg-[#4b66c8] text-white">
                  <T w={55}>Apache 2.2</T>
                </div>
                <div className="ml-px flex h-[17px] w-[15px] items-center justify-center border-l border-[#c9c19a] bg-gradient-to-b from-[#fffef8] to-[#f0e8cb]">
                  <span className="h-0 w-0 border-x-[4px] border-t-[4px] border-x-transparent border-t-[#5e4a10]" />
                </div>
              </div>
            </div>
            <div className="mt-[9px] flex h-[19px] items-center">
              <div className="w-[74px] shrink-0"><T w={44}>Каталог:</T></div>
              <div className="flex h-[19px] flex-1 items-center justify-between rounded-[3px] border border-[#aba276] bg-white pl-[2px] text-black">
                <T w={204}>D:\Users\Andrey\YMCatalog\webService\</T>
                <div className="flex h-[17px] w-[16px] items-center justify-center border-l border-[#c9c19a] bg-gradient-to-b from-[#fffef8] to-[#f0e8cb] font-bold text-[#403000]">...</div>
              </div>
            </div>
            <div className="mt-[7px] flex h-[13px] items-center gap-[2px]"><Check /><T w={210}>Публиковать тонкий клиент и веб-клиент</T></div>
            <div className="mt-[6px] flex h-[13px] items-center gap-[2px]"><Check on /><T w={142}>Публиковать Web-сервисы:</T></div>
            <div className="mt-[7px] flex h-[184px] flex-col border border-[#aba276] bg-white">
              <div className="flex h-[21px] shrink-0 items-center border-b border-[#c9c19a] bg-gradient-to-b from-[#fffdf4] to-[#f1e8c9] text-[#5e4a10]">
                <span className="h-full w-[25px] border-r border-[#c9c19a]" />
                <span className="flex h-full w-[156px] items-center border-r border-[#c9c19a] pl-[4px]"><T w={22}>Имя</T></span>
                <span className="pl-[4px]"><T w={31}>Адрес</T></span>
              </div>
              <div className="flex h-[19px] shrink-0 items-center border-b border-[#d0dae0] text-black">
                <span className="flex h-full w-[25px] items-center border-r border-[#d0dae0] pl-[4px]"><Check on /></span>
                <span className="flex h-full w-[156px] items-center border-r border-[#d0dae0] pl-[4px]"><T w={37}>Catalog</T></span>
                <span className="pl-[4px]"><T w={63}>catalog.1cws</T></span>
              </div>
            </div>
          </div>
          <div className="ml-[7px] flex flex-col text-[#5a4600]">
            <Btn t="Опубликовать" w={72} focus />
            <Btn t="Отключить" w={55} className="mt-[6px]" />
            <Btn t="Закрыть" w={44} className="mt-[7px]" />
            <Btn t="Справка" w={43} className="mt-[8px]" />
          </div>
        </div>
      </div>
    </div>
  );
}

const Plus = ({ minus }: { minus?: boolean }) => (
  <svg width="9" height="9" className="shrink-0" fill="none" shapeRendering="crispEdges">
    <rect x=".5" y=".5" width="8" height="8" fill="#fff" stroke="#000" />
    <path d={minus ? "M2 4.500h5" : "M2 4.500h5M4.500 2v5"} stroke="#000" />
  </svg>
);

function Consumer() {
  return (
    <div className="absolute left-[710px] top-[79px] flex h-[447px] w-[318px]">
      <div className="flex w-[237px] shrink-0 flex-col border-l border-t border-[#8e867a]">
        <div className="flex h-[18px] shrink-0 items-center bg-[#061c62] pl-[4px] font-bold text-white">
          <T w={85}>Конфигурация</T>
          <svg width="9" height="7" className="ml-[115px]" fill="none" shapeRendering="crispEdges">
            <path d="M0 3.500h3M3.500 0v7M4 1.500h4M4 4.500h4M8.500 1v5" stroke="#fff" />
          </svg>
          <span className="ml-[9px] flex"><Cross c="#fff" /></span>
        </div>
        <div className="flex h-[24px] shrink-0 items-center bg-[#e8ded4] pl-[5px] text-black">
          <T w={50}>Действия</T>
          <Caret className="ml-[3px] border-t-black" />
          <Bar k="list" className="ml-[7px]" />
          <Bar k="liste" className="ml-[7px]" />
          <Bar k="lista" className="ml-[7px]" />
          <Bar k="listx" className="ml-[7px]" />
          <Bar k="upr" className="ml-[7px]" />
          <Bar k="downr" className="ml-[7px]" />
          <Bar k="listg" className="ml-[6px]" />
        </div>
        <div className="flex min-h-0 flex-1 border-t border-[#8e867a] text-black">
          <div className="relative w-[221px] shrink-0 overflow-hidden bg-white">
            <svg width="40" height="402" className="absolute left-0 top-0" fill="none" shapeRendering="crispEdges">
              <path d="M14.500 17v385M33.500 34v368" stroke="#333" strokeDasharray="1 1" />
            </svg>
            <div className="relative -mt-px flex h-[17px] items-center pl-[5px]">
              <Svg>{G.cfgR}</Svg>
              <T w={171} className="ml-[4px]">УправлениеТорговлейДляБела...</T>
              <svg width="9" height="9" className="ml-[16px] mt-[7px]">
                <path d="M0 2l5-2 4 2v5l-4 2-5-2z" fill="#d8b810" />
                <path d="M0 2l5-2 4 2-4 2z" fill="#f6e23c" />
              </svg>
            </div>
            <div className="relative flex h-[17px] items-center pl-[10px]">
              <Plus minus />
              <span className="w-[5px] border-t border-dotted border-[#333]" />
              <Svg>{G.commonR}</Svg>
              <T w={35} className="ml-[4px]">Общие</T>
            </div>
            {rightRows.map(([k, t, w, exp, fold]) => (
              <div key={t} className="relative flex h-[17px] items-center pl-[29px]">
                {exp ? <Plus /> : <span className="ml-[5px] w-[4px] border-t border-dotted border-[#333]" />}
                <span className="w-[5px] shrink-0 border-t border-dotted border-[#333]" />
                <Svg>
                  {G[k]}
                  {fold !== "n" && (
                    <path
                      d="M8 10h3l1 1h4v5H8z"
                      fill={fold === "y" ? "#dcd68c" : "#c8c8c8"}
                      stroke={fold === "y" ? "#a8a25c" : "#909090"}
                      strokeWidth=".6"
                    />
                  )}
                </Svg>
                {k === "wsR" ? (
                  <span className="ml-[2px] flex h-[17px] w-[63px] items-center border border-dotted border-[#e8e840] bg-[#000080] pl-px text-white">
                    <T w={w}>{t}</T>
                  </span>
                ) : (
                  <T w={w} className="ml-[4px]">{t}</T>
                )}
              </div>
            ))}
          </div>
          <div className="w-[15px] border-l border-[#c9c0b4] bg-gradient-to-r from-[#d6cfc0] to-[#e8e1d8]">
            <div className="flex h-[14px] w-[13px] items-center justify-center border border-[#8e867a] bg-[#e8e1d4]">
              <svg width="7" height="4" fill="none"><path d="M.5 3.500l3-3 3 3" stroke="#222" /></svg>
            </div>
          </div>
        </div>
      </div>
      <div className="mt-px w-[3px] border-x border-[#8e8672] bg-[#efe9dc]" />
      <div className="mt-[1px] flex-1 border-t-2 border-[#444] bg-[#848284]" />
    </div>
  );
}

function ContextMenu() {
  return (
    <div className="absolute left-[834px] top-[484px] h-[26px] w-[159px] border border-[#7d7466] bg-white p-px">
      <div className="flex h-full items-center border border-[#8e867a] bg-[#d6d2c4] pl-[4px] text-black">
        <Bar k="list" />
        <T w={50} className="ml-[11px]"><u>Д</u>обавить</T>
        <T w={14} className="ml-[46px]">Ins</T>
      </div>
    </div>
  );
}

function UrlDialog() {
  return (
    <div className="absolute left-[888px] top-[521px] flex h-[86px] w-[299px] flex-col border-b-[4px] border-l-[3px] border-[#061c62] bg-[#ede5dd] text-black">
      <div className="flex h-[22px] shrink-0 items-center justify-between bg-[#061c62] pl-[4px] pr-[1px] pt-[3px] font-bold text-white">
        <T w={221}>Введите URL импортируемого WSDL</T>
        <Cross c="#fff" />
      </div>
      <div className="ml-[6px] mr-[3px] mt-[6px] flex h-[20px] shrink-0 items-center border border-[#8e867a] bg-white pl-[2px]">
        <T w={263}>http://localhost/YandexCatalog/ws/catalog.1cws?wsdl</T>
        <span className="h-[13px] w-px bg-black" />
      </div>
      <div className="mr-[3px] mt-[8px] flex justify-end gap-[5px]">
        <div className="flex h-[20px] w-[76px] items-center justify-center border-2 border-[#8e8672] bg-[#dbd6c8]"><T w={16}>OK</T></div>
        <div className="flex h-[20px] w-[76px] items-center justify-center border border-[#8e8672] bg-[#dbd6c8] shadow-[inset_0_0_0_2px_#e6e1d6]"><T w={39}>Отмена</T></div>
      </div>
    </div>
  );
}

function Marks() {
  return (
    <svg width="1366" height="768" className="absolute left-0 top-0" fill="none">
      <path d="M672.500 0L677 768" stroke="#000" strokeWidth="2.200" />
      <g stroke="#800000" strokeWidth="2">
        <rect x="295.500" y="67" width="367.500" height="175" rx="10" />
        <rect x="229" y="359.500" width="435" height="190.500" rx="10" />
        <rect x="38" y="557" width="190" height="89" rx="10" />
        <path d="M115 553L292 221M282.500 227L292.500 220.500L292.500 233" />
        <path d="M376.500 242V352M371 341l5.500 11 5.500-11" />
      </g>
      <path d="M254 584L314 460M304 467.500l10-7.500.5 12" stroke="#000" strokeWidth="2" />
      <g stroke="#f00" strokeWidth="2">
        <path d="M322 404H388L979 570M979 569.500H1046" />
        <path d="M426 546H491L1038 665M1081 562L1038 665M1036.500 655l1.500 11 8-6.500" />
        <path d="M1076 566.500H1138" />
      </g>
    </svg>
  );
}

export default function App() {
  return (
    <div className="relative h-[768px] w-[1366px] overflow-hidden bg-white font-['Liberation_Sans',Arial,sans-serif] text-[11.5px] leading-[14px]">
      <Designer />
      <AdminMenu />
      <PublishDialog />
      <Consumer />
      <ContextMenu />
      <UrlDialog />
      <Marks />
      <T w={319} className="absolute left-[156px] top-[28px] text-[21px] leading-[26px] text-[#151515]">В базе-поставщике веб-сервиса</T>
      <T w={328} className="absolute left-[828px] top-[28px] text-[21px] leading-[26px] text-[#151515]">В базе-потребителе веб-сервиса</T>
      <T w={208} className="absolute left-[449px] top-[50px] text-[16px] leading-[20px] text-[#8c1a1e]">2. опубликовать веб-сервис</T>
      <T w={255} className="absolute left-[405px] top-[337px] text-[16px] leading-[20px] text-[#8c1a1e]">3. Указать параметры публикации</T>
      <T w={163} className="absolute left-[49px] top-[661px] text-[16px] leading-[20px] text-[#8c1a1e]">1. создать веб-сервис</T>
      <T w={170} className="absolute left-[260px] top-[577px] text-[16px] leading-[20px] text-[#222]">путь только латиницей</T>
    </div>
  );
}
